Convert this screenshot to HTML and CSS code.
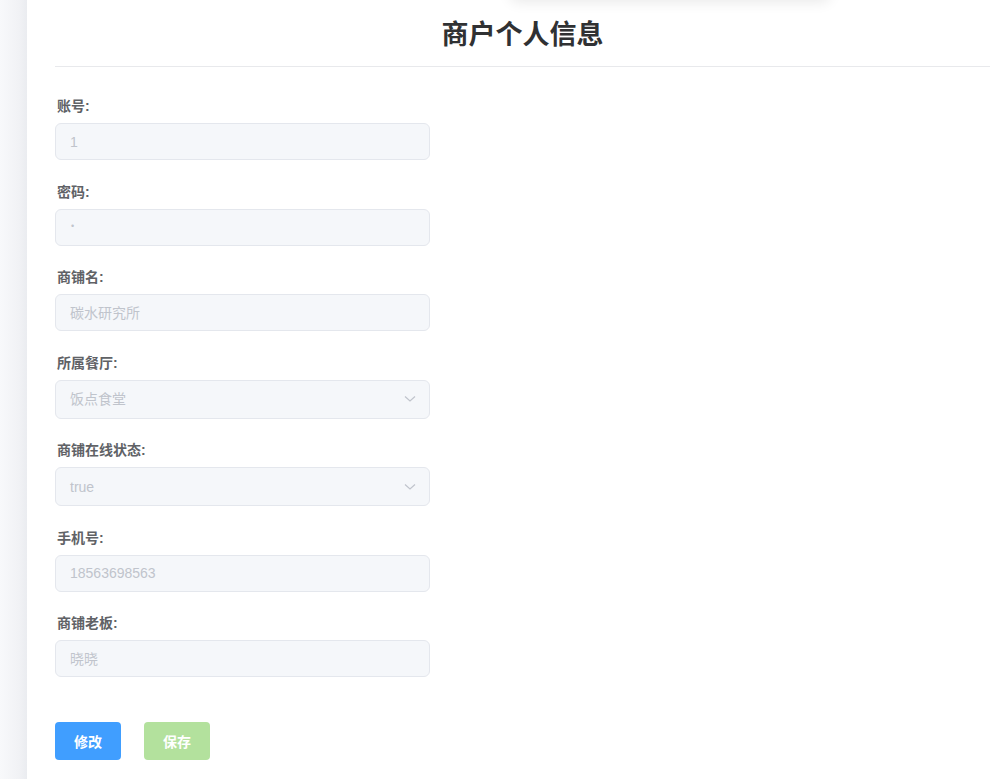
FILE: index.html
```html
<!DOCTYPE html>
<html lang="zh-CN">
<head>
<meta charset="utf-8">
<title>商户个人信息</title>
<link rel="stylesheet" href="styles.css">
</head>
<body>
<div class="app">
  <div class="side"></div>
  <div class="main">
    <div class="popper-shadow"></div>
    <div class="header"><h1 class="title">商户个人信息</h1></div>
    <div class="form">
      <div class="item">
        <div class="label">账号:</div>
        <div class="field"><span class="val">1</span></div>
      </div>
      <div class="item">
        <div class="label">密码:</div>
        <div class="field"><span class="val dot">•</span></div>
      </div>
      <div class="item">
        <div class="label">商铺名:</div>
        <div class="field"><span class="val">碳水研究所</span></div>
      </div>
      <div class="item">
        <div class="label">所属餐厅:</div>
        <div class="field select"><span class="val">饭点食堂</span>
          <svg class="chev" width="12" height="8" viewBox="0 0 12 8"><path d="M1 1.5 L6 6 L11 1.5" fill="none" stroke="#c0c4cc" stroke-width="1.2"/></svg>
        </div>
      </div>
      <div class="item">
        <div class="label">商铺在线状态:</div>
        <div class="field select"><span class="val">true</span>
          <svg class="chev" width="12" height="8" viewBox="0 0 12 8"><path d="M1 1.5 L6 6 L11 1.5" fill="none" stroke="#c0c4cc" stroke-width="1.2"/></svg>
        </div>
      </div>
      <div class="item">
        <div class="label">手机号:</div>
        <div class="field"><span class="val">18563698563</span></div>
      </div>
      <div class="item">
        <div class="label">商铺老板:</div>
        <div class="field"><span class="val">晓晓</span></div>
      </div>
      <div class="actions">
        <button class="btn btn-primary">修改</button>
        <button class="btn btn-success">保存</button>
      </div>
    </div>
  </div>
</div>
</body>
</html>
```
FILE: styles.css
```css
html, body {
  margin: 0;
  padding: 0;
  background: #ffffff;
  font-family: "Liberation Sans", "Noto Sans CJK SC", sans-serif;
}
.app {
  display: flex;
  min-height: 779px;
}
.side {
  width: 27px;
  flex: none;
  background: linear-gradient(to right, #f8f9fb 0%, #f1f2f5 70%, #eaecf0 100%);
}
.main {
  flex: 1;
  position: relative;
  padding-left: 28px;
  overflow: hidden;
}
.popper-shadow {
  position: absolute;
  left: 483px;
  top: -40px;
  width: 320px;
  height: 38px;
  background: #fff;
  border-radius: 8px;
  box-shadow: 0 4px 14px rgba(0, 0, 0, 0.09);
}
.header {
  border-bottom: 1px solid #e8e9ec;
  padding: 16px 0 12px;
  text-align: center;
}
.title {
  margin: 0;
  font-size: 27px;
  line-height: 38px;
  font-weight: bold;
  color: #303133;
}
.form {
  padding-top: 29px;
  width: 375px;
}
.item {
  margin-bottom: 21.5px;
}
.label {
  font-size: 14px;
  font-weight: bold;
  line-height: 20px;
  color: #606266;
  padding-left: 2px;
  margin-bottom: 7px;
}
.field {
  box-sizing: border-box;
  height: 37px;
  background: #f5f7fa;
  border: 1px solid #e4e7ed;
  border-radius: 6px;
  padding-left: 14px;
  padding-right: 12px;
  display: flex;
  align-items: center;
  font-size: 14px;
  color: #c0c4cc;
}
.field.select {
  height: 39px;
  justify-content: space-between;
}
.val {
  line-height: 20px;
}
.dot {
  font-size: 9px;
  position: relative;
  top: -1px;
  left: 1px;
}
.chev {
  display: block;
  margin-right: 1px;
}
.actions {
  display: flex;
  gap: 23px;
  margin-top: 45px;
}
.btn {
  width: 66px;
  height: 38px;
  border: none;
  border-radius: 4px;
  color: #ffffff;
  font-size: 14px;
  font-weight: bold;
  font-family: "Liberation Sans", "Noto Sans CJK SC", sans-serif;
  padding: 0;
}
.btn-primary {
  background: #409eff;
}
.btn-success {
  background: #b3e19d;
}
```
